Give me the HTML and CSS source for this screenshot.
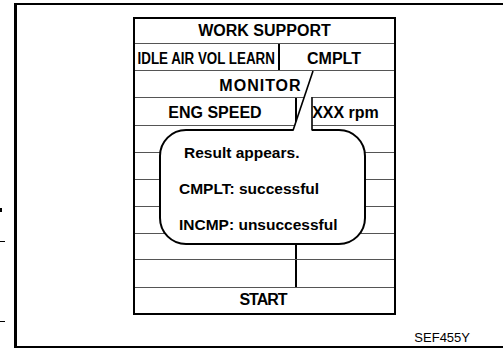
FILE: index.html
```html
<!DOCTYPE html>
<html lang="en">
<head>
    <meta charset="UTF-8">
    <meta name="viewport" content="width=device-width, initial-scale=1.0">
    <title>Work Support - Idle Air Vol Learn</title>
    <link rel="stylesheet" href="styles.css">
</head>
<body>
    <div class="marks">
        <span class="mark-dot"></span>
        <span class="mark-line first"></span>
        <span class="mark-line second"></span>
    </div>

    <div class="frame">
        <div class="screen">
            <div class="row title">WORK SUPPORT</div>
            <div class="row split-a">
                <div class="cell item"><span class="squeeze">IDLE AIR VOL LEARN</span></div>
                <div class="cell status">CMPLT</div>
            </div>
            <div class="row monitor">MONITOR</div>
            <div class="row split-b">
                <div class="cell">ENG SPEED</div>
                <div class="cell">XXX rpm</div>
            </div>
            <div class="row split-b"><div class="cell"></div><div class="cell"></div></div>
            <div class="row split-b"><div class="cell"></div><div class="cell"></div></div>
            <div class="row split-b"><div class="cell"></div><div class="cell"></div></div>
            <div class="row split-b"><div class="cell"></div><div class="cell"></div></div>
            <div class="row split-b"><div class="cell"></div><div class="cell"></div></div>
            <div class="row split-b"><div class="cell"></div><div class="cell"></div></div>
            <div class="row start">START</div>

            <div class="balloon">
                <p class="lead">Result appears.</p>
                <p>CMPLT: successful</p>
                <p>INCMP: unsuccessful</p>
            </div>
            <svg class="tail" width="259" height="294" viewBox="0 0 259 294">
                <polygon points="178,52 158,112.5 177,112.5" fill="#fff"/>
                <line x1="178" y1="52" x2="158" y2="111.5" stroke="#000" stroke-width="1.6"/>
                <line x1="177" y1="78" x2="177" y2="111.5" stroke="#000" stroke-width="1.6"/>
            </svg>
        </div>
        <div class="code">SEF455Y</div>
    </div>
</body>
</html>
```

FILE: styles.css
```css
body {
    margin: 0;
    background: #fff;
    color: #000;
    font-family: "Liberation Sans", Arial, sans-serif;
    display: flex;
}

/* crop marks on the page edge */
.marks {
    width: 14px;
    flex-shrink: 0;
    display: flex;
    flex-direction: column;
}

.mark-dot {
    width: 2px;
    height: 4px;
    margin-top: 208px;
    background: #000;
}

.mark-line {
    width: 5px;
    height: 1px;
    background: #000;
}

.mark-line.first {
    margin-top: 29px;
}

.mark-line.second {
    margin-top: 79px;
}

.frame {
    flex: 1;
    margin-top: 3px;
    height: 345px;
    box-sizing: border-box;
    border-top: 2px solid #000;
    border-left: 3px solid #000;
    border-bottom: 2px solid #000;
    display: flex;
    flex-direction: column;
}

/* the consult screen */
.screen {
    position: relative;
    width: 263px;
    height: 298px;
    box-sizing: border-box;
    margin: 12px 0 0 116px;
    border: 2px solid #000;
    display: grid;
    grid-template-rows: 25px 27px 27px 28px 27px 27px 27px 27px 26px 28px 25px;
}

.row {
    border-bottom: 1px solid #555;
    display: flex;
    align-items: center;
    justify-content: center;
    font-size: 16px;
    font-weight: bold;
    white-space: nowrap;
}

.row.start {
    border-bottom: none;
    letter-spacing: -1px;
    padding: 0 3px 2px 0;
}

.row.monitor {
    letter-spacing: 1px;
    padding: 4px 8px 0 0;
}

.split-a,
.split-b {
    display: grid;
    align-items: stretch;
}

.split-a {
    grid-template-columns: 145px 1fr;
}

.split-b {
    grid-template-columns: 162px 1fr;
}

.cell {
    display: flex;
    align-items: center;
    justify-content: center;
    padding-top: 3px;
}

.cell:first-child {
    border-right: 2px solid #000;
}

.split-a .cell {
    padding-top: 4px;
}

.cell.status {
    padding-right: 6px;
}

.squeeze {
    display: inline-block;
    transform: scaleX(0.835);
}

/* speech balloon over the list */
.balloon {
    position: absolute;
    left: 24px;
    top: 110px;
    width: 207px;
    height: 116px;
    box-sizing: border-box;
    border: 2px solid #000;
    border-radius: 27px;
    background: #fff;
    padding: 4px 0 0 18px;
}

.balloon p {
    margin: 0;
    font-size: 15.5px;
    font-weight: bold;
    line-height: 36px;
    white-space: nowrap;
}

.balloon p.lead {
    padding-left: 5px;
}

.tail {
    position: absolute;
    left: 0;
    top: 0;
}

.code {
    align-self: flex-end;
    margin: 15px 33px 0 0;
    font-size: 13px;
    line-height: 15px;
}
```
